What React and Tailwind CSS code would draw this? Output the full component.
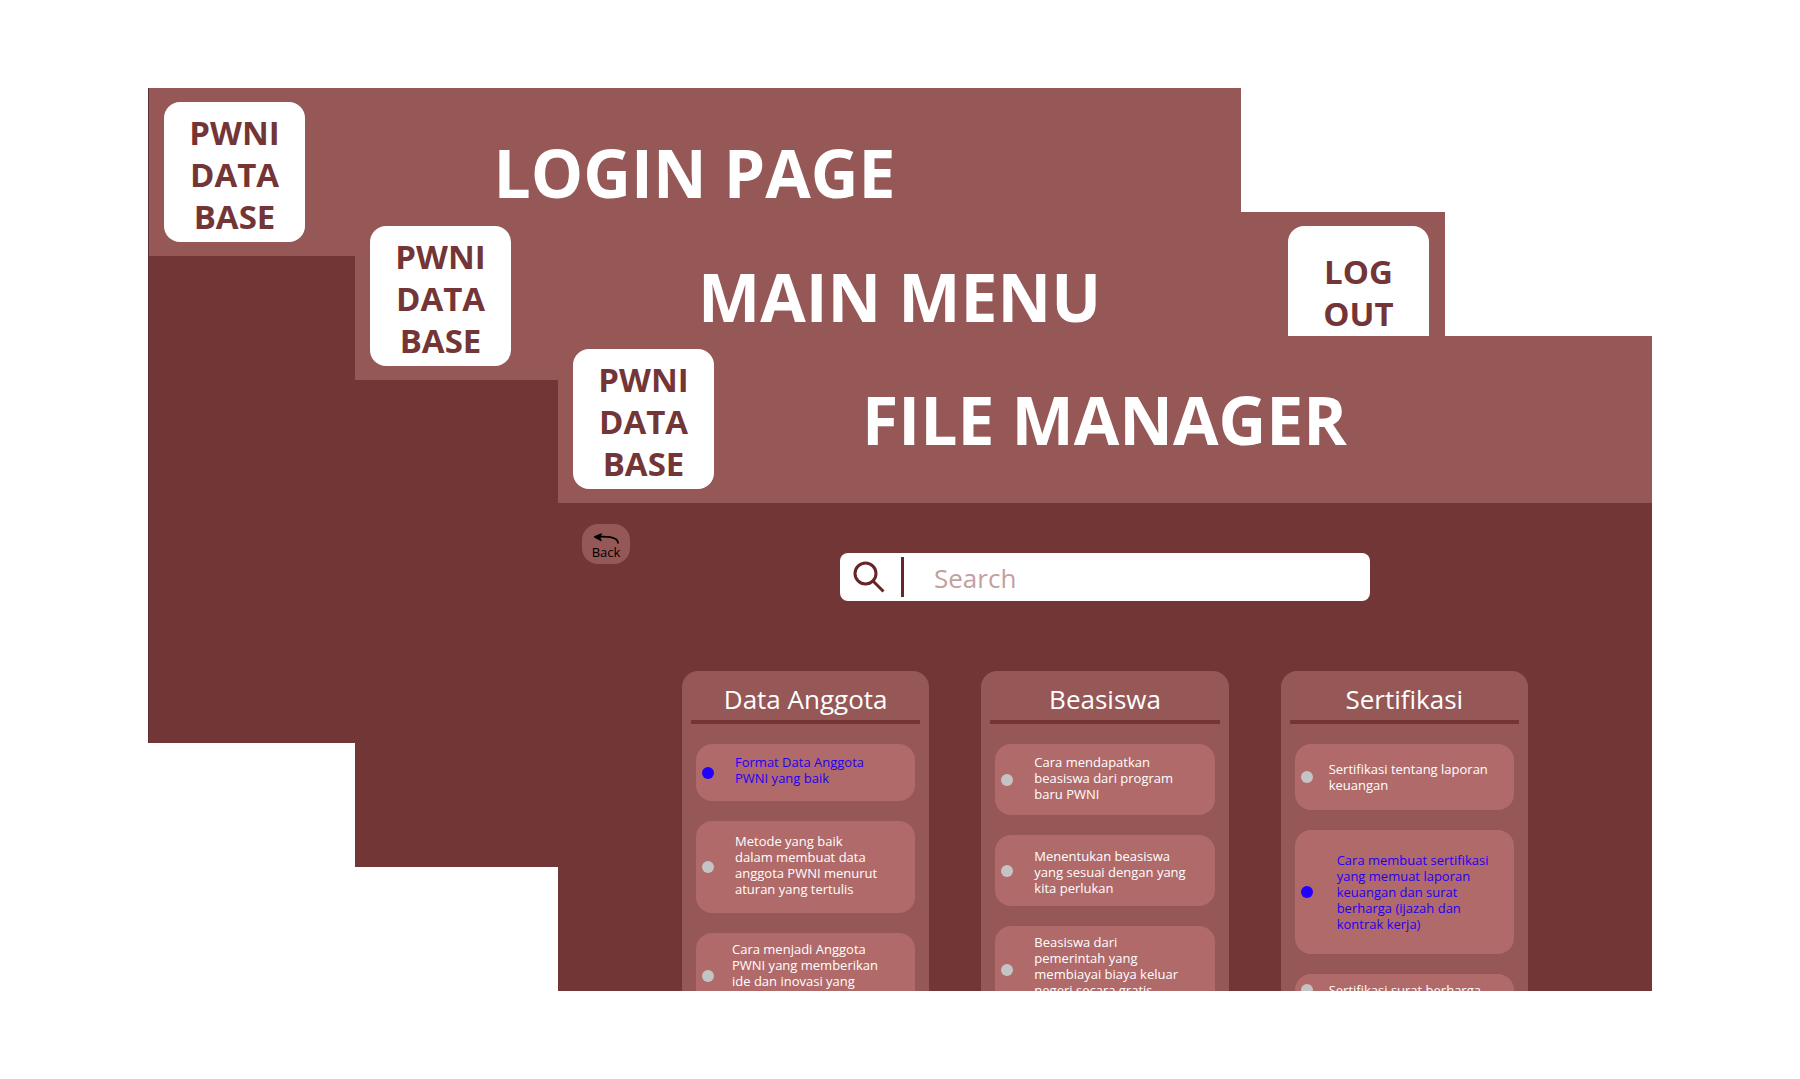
import React from "react";

const columns = [
  {
    title: "Data Anggota",
    items: [
      { text: "Format Data Anggota\nPWNI yang baik", pad: "pt-[10px] pb-[15px] pl-[21px]", active: true },
      { text: "Metode yang baik\ndalam membuat data\nanggota PWNI menurut\naturan yang tertulis", pad: "pt-3 pb-4 pl-[21px]" },
      { text: "Cara menjadi Anggota\nPWNI yang memberikan\nide dan inovasi yang", pad: "pt-2 pb-[30px] pl-[18px]" },
    ],
  },
  {
    title: "Beasiswa",
    items: [
      { text: "Cara mendapatkan\nbeasiswa dari program\nbaru PWNI", pad: "pt-[10px] pb-[13px] pl-[21px]" },
      { text: "Menentukan beasiswa\nyang sesuai dengan yang\nkita perlukan", pad: "pt-[13px] pb-[10px] pl-[21px]" },
      { text: "Beasiswa dari\npemerintah yang\nmembiayai biaya keluar\nnegeri secara gratis", pad: "pt-2 pb-4 pl-[21px]" },
    ],
  },
  {
    title: "Sertifikasi",
    items: [
      { text: "Sertifikasi tentang laporan\nkeuangan", pad: "pt-[17px] pb-[17px] pl-4" },
      { text: "Cara membuat sertifikasi\nyang memuat laporan\nkeuangan dan surat\nberharga (ijazah dan\nkontrak kerja)", pad: "pt-[22px] pb-[22px] pl-6", active: true },
      { text: "Sertifikasi surat berharga", pad: "pt-2 pb-2 pl-4" },
    ],
  },
];

const badge =
  "flex h-[140px] w-[141px] flex-col items-center justify-center rounded-2xl bg-white text-[33px] leading-[42px] font-bold text-[#733535]";

function Header({ title, logout, pad = "py-[14px]" }) {
  return (
    <header className={`grid grid-cols-[1fr_auto_1fr] items-center bg-[#965757] pr-4 pl-[15px] ${pad}`}>
      <div className={`${badge} pt-1.5`}>
        <span>PWNI</span>
        <span>DATA</span>
        <span>BASE</span>
      </div>
      <h1 className="text-[66px] leading-[72px] font-bold whitespace-nowrap text-white">{title}</h1>
      {logout && (
        <button type="button" className={`${badge} justify-self-end pb-1.5`}>
          <span>LOG</span>
          <span>OUT</span>
        </button>
      )}
    </header>
  );
}

function BackButton() {
  return (
    <button
      type="button"
      className="flex h-10 w-12 flex-col items-center rounded-2xl bg-[#965757] pt-[9px] text-[13px] leading-4 text-black"
    >
      <svg width="26" height="11" viewBox="0 0 26 11" fill="none" stroke="currentColor" strokeWidth="1.8" strokeLinecap="round" strokeLinejoin="round" aria-hidden="true">
        <path d="M2.5 4C12 3.2 24.6 3.4 25 9.8" />
        <path d="M8.5 0.9L1.5 3.9L8 7.6L6.4 4Z" fill="currentColor" strokeWidth="1.2" />
      </svg>
      Back
    </button>
  );
}

function SearchBox() {
  return (
    <label className="mt-[29px] flex h-12 items-center rounded-lg bg-white pl-[13px]">
      <svg width="32" height="32" viewBox="0 0 32 32" fill="none" stroke="#682426" strokeWidth="3" aria-hidden="true">
        <circle cx="12.5" cy="12.5" r="10.5" />
        <path d="M20 20L30.5 30.5" />
      </svg>
      <span className="ml-4 h-10 w-[3px] bg-[#682426]" />
      <input
        type="text"
        aria-label="Search"
        placeholder="Search"
        className="ml-[30px] h-10 min-w-0 flex-1 bg-transparent pt-0.5 text-[26px] text-[#682426] outline-none placeholder:text-[#c3a0a0]"
      />
    </label>
  );
}

function Column({ title, items }) {
  return (
    <section className="rounded-t-2xl bg-[#965757]">
      <h2 className="pt-[10px] pb-[3px] text-center text-[26px] leading-9 text-white">{title}</h2>
      <div className="mx-[9px] h-1 bg-[#733535]" />
      <ul className="mx-[14px] mt-5 flex flex-col gap-5">
        {items.map(({ text, pad, active }) => (
          <li key={text} className="flex items-center rounded-2xl bg-[#b16a6a] pl-[6px]">
            <span className={`size-3 shrink-0 rounded-full ${active ? "bg-[#2000ff]" : "bg-[#c4c4c4]"}`} />
            <a
              href="#"
              className={`text-[13px] leading-4 whitespace-pre ${pad} ${active ? "text-[#2400f0]" : "text-white"}`}
            >
              {text}
            </a>
          </li>
        ))}
      </ul>
    </section>
  );
}

export default function App() {
  return (
    <main className="relative h-screen min-h-[900px] overflow-hidden bg-white font-['Open_Sans',sans-serif]">
      <section className="absolute top-[88px] right-[559px] bottom-[336px] left-[148px] border-l border-[#5a3033] bg-[#733636]">
        <Header title="LOGIN PAGE" />
      </section>
      <section className="absolute top-[212px] right-[355px] bottom-[212px] left-[355px] bg-[#733636]">
        <Header title="MAIN MENU" logout />
      </section>
      <section className="absolute top-[336px] right-[148px] bottom-[88px] left-[558px] overflow-hidden bg-[#733636]">
        <Header title="FILE MANAGER" pad="pt-[13px] pb-[14px]" />
        <div className="grid grid-cols-[1fr_530px_1fr] items-start px-6 pt-[21px]">
          <BackButton />
          <SearchBox />
        </div>
        <div className="mt-[70px] grid grid-cols-3 gap-[52px] px-[124px]">
          {columns.map((column) => (
            <Column key={column.title} {...column} />
          ))}
        </div>
      </section>
    </main>
  );
}
